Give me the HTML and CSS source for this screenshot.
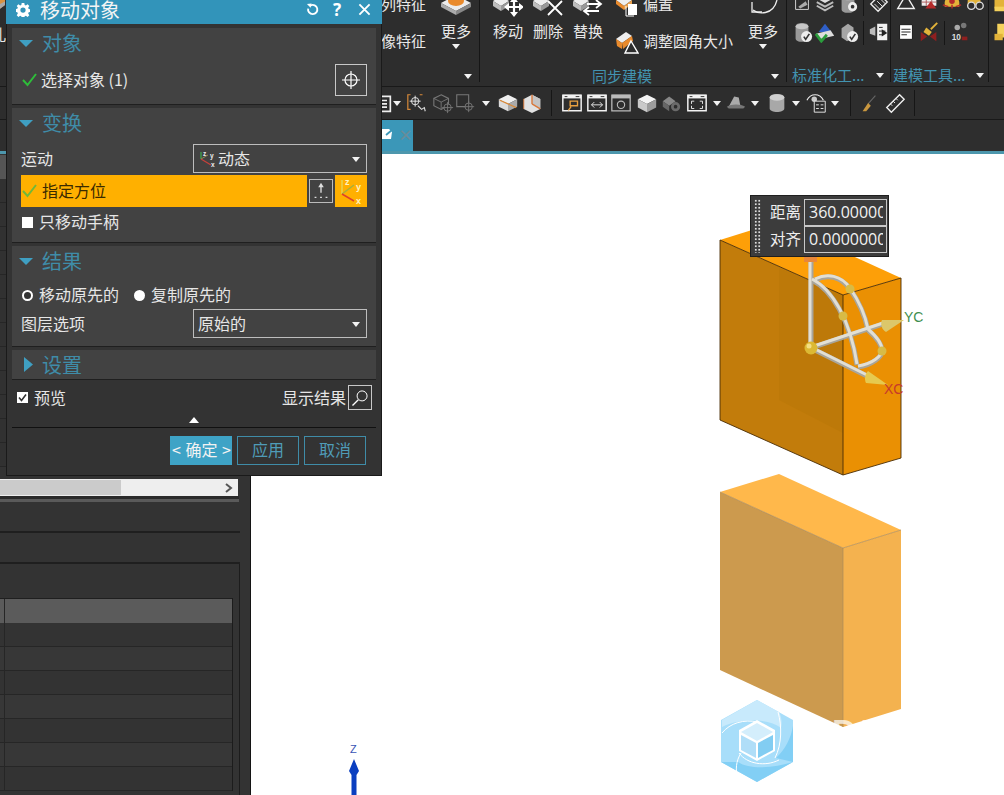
FILE: index.html
```html
<!DOCTYPE html>
<html lang="zh">
<head>
<meta charset="utf-8">
<title>移动对象</title>
<link rel="stylesheet" href="styles.css">
</head>
<body>
<svg class="defs" aria-hidden="true">
  <defs>
    <symbol id="arrow" viewBox="0 0 10 10"><path d="M1 3h8L5 8z" fill="#f2f2f2"/></symbol>
    <symbol id="cube" viewBox="0 0 24 24"><path d="M12 3l10 5-10 5L2 8z" fill="#f4f4f4"/><path d="M2 8l10 5v9L2 17z" fill="#c9c9c9"/><path d="M22 8l-10 5v9l10-5z" fill="#9c9c9c"/></symbol>
    <symbol id="cubeP" viewBox="0 0 24 24"><path d="M12 3l9 4.500v11L12 23l-9-4.500v-11z" fill="#e2e2e2"/><path d="M12 3l9 4.500v11L12 13z" fill="#c4c4c4"/><path d="M12 3v10M12 13l9 5.500" stroke="#d9783a" stroke-width="1.500" fill="none"/><path d="M3 7.500v11" stroke="#d9783a" stroke-width="1"/></symbol>
    <symbol id="win" viewBox="0 0 24 24"><path d="M2 3.500h20v17H2z" fill="#2d2d2d" stroke="#f2f2f2" stroke-width="1.600"/><path d="M2 3h20v4H2z" fill="#f2f2f2"/><path d="M4 5h3M16 5h4" stroke="#2d2d2d" stroke-width="1"/></symbol>
    <symbol id="gcyl" viewBox="0 0 24 24"><path d="M5 6c0-5 14-5 14 0v13c0 5-14 5-14 0z" fill="#999"/><ellipse cx="12" cy="6" rx="7" ry="3" fill="#c6c6c6"/></symbol>
    <symbol id="chk" viewBox="0 0 24 24"><circle cx="17" cy="17" r="6" fill="#eee"/><path d="M14 17l2 3 4-6" stroke="#333" stroke-width="1.800" fill="none"/></symbol>
    <symbol id="rcube" viewBox="0 0 30 30"><path d="M0 8l8-5 8 5-8 5z" fill="#eee"/><path d="M0 8l8 5v5L0 13z" fill="#bdbdbd"/><path d="M16 8l-8 5v5l8-5z" fill="#999"/></symbol>
  </defs>
</svg>

<div class="app">
  <header class="ribbon">
    <div class="stub">
      <svg class="stub-cube" viewBox="0 0 16 16"><path d="M0 2h16v6L8 14 0 8z" fill="#d9913f"/><path d="M8 14V8l8-4v4z" fill="#a8a8a8"/></svg>
      <span class="stub-text">孔</span>
    </div>

    <section class="grp grp-a">
      <div class="grp-body">
        <div class="small-col col-feature">
          <div class="small-row">列特征</div>
          <div class="small-row">像特征</div>
        </div>
        <div class="tool tool-more">
          <svg class="tool-icon" viewBox="0 0 30 30"><path d="M15 2l15 8-15 8-15-8z" fill="#ececec"/><path d="M0 10l15 8v4L0 14z" fill="#aaa"/><path d="M30 10l-15 8v4l15-8z" fill="#888"/><ellipse cx="15" cy="8" rx="8" ry="5" fill="#e98a2c"/></svg>
          <span>更多</span>
          <svg class="more-arrow"><use href="#arrow"/></svg>
        </div>
      </div>
      <div class="grp-label label-a"><svg class="lab-arrow"><use href="#arrow"/></svg></div>
    </section>

    <section class="grp grp-b">
      <div class="grp-body">
        <div class="tool">
          <svg class="tool-icon" viewBox="0 0 30 30"><use href="#rcube"/><path d="M21 7v14M14 14h14" stroke="#fff" stroke-width="2.200"/><path d="M21 4l4 5h-8zM21 24l4-5h-8zM11 14l5-4v8zM31 14l-5-4v8z" fill="#fff"/></svg>
          <span>移动</span>
        </div>
        <div class="tool">
          <svg class="tool-icon" viewBox="0 0 30 30"><use href="#rcube"/><path d="M15 8l14 14M29 8L15 22" stroke="#fff" stroke-width="1.800"/></svg>
          <span>删除</span>
        </div>
        <div class="tool">
          <svg class="tool-icon" viewBox="0 0 30 30"><use href="#rcube"/><path d="M14 11h13m-4-4l5 4-5 4M26 18H12m4-4l-5 4 5 4" stroke="#fff" stroke-width="1.800" fill="none"/></svg>
          <span>替换</span>
        </div>
        <div class="small-col col-sync">
          <div class="small-row">
            <svg class="small-icon" viewBox="0 0 24 24"><path d="M1 7l8-5 8 5-8 6z" fill="#eee"/><path d="M1 7l8 6v4L1 11z" fill="#e98a2c"/><path d="M17 7l-8 6v4l8-6z" fill="#e9a04c"/><path d="M11 13v10h8" fill="none" stroke="#fff"/><path d="M13 11h9v11h-9z" fill="#fff"/></svg>
            <span>偏置</span>
          </div>
          <div class="small-row">
            <svg class="small-icon" viewBox="0 0 24 24"><path d="M1 9l10-7 6 4-10 7z" fill="#eee"/><path d="M1 9l6 4 0 6-5-3z" fill="#e98a2c"/><path d="M7 13l10-7 1 5-10 8z" fill="#e98a2c"/><path d="M16 11l7 12H10z" fill="#2d2d2d" stroke="#fff" stroke-width="1.400"/></svg>
            <span>调整圆角大小</span>
          </div>
        </div>
        <div class="tool tool-more">
          <svg class="tool-icon" viewBox="0 0 30 30"><path d="M5 17c5 4 20 6 24-10" fill="none" stroke="#eee" stroke-width="1.300"/><path d="M4 9v10h10" fill="none" stroke="#eee" stroke-width="1.300"/></svg>
          <span>更多</span>
          <svg class="more-arrow"><use href="#arrow"/></svg>
        </div>
      </div>
      <div class="grp-label label-b">同步建模<svg class="lab-arrow"><use href="#arrow"/></svg></div>
    </section>

    <section class="grp grp-c">
      <div class="icon-rows">
        <div class="icon-row">
          <svg class="ico" viewBox="0 0 24 24"><path d="M5 5h14v14H5z" fill="none" stroke="#ddd"/><path d="M8 16l8-6 2 4-8 4z" fill="#aaa"/></svg>
          <svg class="ico" viewBox="0 0 24 24"><path d="M12 2l9 5-9 5-9-5z" fill="#ddd"/><path d="M3 11l9 5 9-5M3 15l9 5 9-5" stroke="#bbb" stroke-width="2" fill="none"/></svg>
          <svg class="ico" viewBox="0 0 24 24"><use href="#gcyl"/><circle cx="17" cy="16" r="5" fill="#eee"/><circle cx="17" cy="16" r="2" fill="#333"/></svg>
          <i class="vsep"></i>
          <svg class="ico" viewBox="0 0 24 24"><path d="M3 13L13 3l8 8-10 10z" fill="none" stroke="#eee" stroke-width="1.500"/><path d="M7 13l6 6M10 10l6 6M13 7l6 6" stroke="#eee"/></svg>
        </div>
        <div class="icon-row">
          <svg class="ico" viewBox="0 0 24 24"><use href="#gcyl"/><use href="#chk"/></svg>
          <svg class="ico" viewBox="0 0 24 24"><path d="M12 3l7 9H5z" fill="#2f5fc7"/><path d="M2 14l16-4 4 6-16 4z" fill="#ddd"/><path d="M2 14l6 8 6-7" fill="none" stroke="#2a9c3c" stroke-width="3"/></svg>
          <svg class="ico" viewBox="0 0 24 24"><path d="M5 8l7-5 6 4v11l-7 4-6-4z" fill="#a6a6a6"/><use href="#chk"/></svg>
          <i class="vsep"></i>
          <svg class="ico" viewBox="0 0 24 24"><path d="M10 3h11v18H10z" fill="#f2f2f2"/><path d="M12 7h4M12 11h7M12 15h4" stroke="#222"/><path d="M2 9l6-3v10l-6-2z" fill="#bbb"/><path d="M15 9l6 4-6 4z" fill="#222"/></svg>
        </div>
      </div>
      <div class="grp-label label-c">标准化工...<svg class="lab-arrow"><use href="#arrow"/></svg></div>
    </section>

    <section class="grp grp-d">
      <div class="icon-rows">
        <div class="icon-row">
          <svg class="ico" viewBox="0 0 24 24"><path d="M12 3l9 15H3z" fill="none" stroke="#f2f2f2" stroke-width="1.500"/></svg>
          <svg class="ico" viewBox="0 0 24 24"><path d="M4 3h16v12H4z" fill="#eee"/><path d="M4 7h16M4 11h16M9 3v12M15 3v12" stroke="#a55"/><path d="M14 10l6 8H8z" fill="#b52a2a"/></svg>
          <svg class="ico" viewBox="0 0 24 24"><path d="M4 12c0-10 16-10 16 0v4H4z" fill="#e3b33a"/><circle cx="12" cy="10" r="3" fill="#b52a2a"/><path d="M2 14l6 2M22 14l-6 2M12 14v4" stroke="#b52a2a" stroke-width="1.600"/></svg>
          <svg class="ico" viewBox="0 0 24 24"><path d="M4 10c0-8 14-8 14 0v4H4z" fill="#e3b33a"/><circle cx="8" cy="15" r="4" fill="#2d2d2d" stroke="#ddd" stroke-width="1.500"/><circle cx="17" cy="15" r="4" fill="#2d2d2d" stroke="#ddd" stroke-width="1.500"/></svg>
        </div>
        <div class="icon-row">
          <svg class="ico" viewBox="0 0 24 24"><path d="M5 4h14v16H5z" fill="#fff" stroke="#111"/><path d="M7 9h10M7 12h10M7 15h6" stroke="#111"/></svg>
          <svg class="ico" viewBox="0 0 24 24"><path d="M14 9l7-7" stroke="#e3b33a" stroke-width="2"/><path d="M9 7l6 5-3 4-6-4z" fill="#e3b33a"/><path d="M3 12l7 5-7 5zM20 12l-7 5 7 5z" fill="#8e1f1f"/></svg>
          <i class="vsep"></i>
          <svg class="ico" viewBox="0 0 24 24"><circle cx="9" cy="7" r="3" fill="#aaa"/><circle cx="16" cy="5" r="3" fill="#777"/><text class="mini-num" x="3" y="21">10</text><path d="M14 17h6v4h-6z" fill="#8e1f1f"/></svg>
        </div>
      </div>
      <div class="grp-label label-d">建模工具...<svg class="lab-arrow"><use href="#arrow"/></svg></div>
    </section>

    <section class="grp-e">
      <div class="icon-rows">
        <div class="icon-row"><svg class="ico" viewBox="0 0 24 24"><path d="M6 4h12v14H6z" fill="#e3b33a"/><path d="M6 16h12v5H6z" fill="#f5d25c"/></svg></div>
        <div class="icon-row"><svg class="ico" viewBox="0 0 24 24"><path d="M9 3h9v15H9z" fill="#f5d25c"/><path d="M6 14h9v7H6z" fill="#e3b33a"/></svg></div>
      </div>
    </section>
  </header>

  <nav class="toolbar">
    <svg class="i i20" viewBox="0 0 24 24"><path d="M2 4h20v18H2z" fill="none" stroke="#eee" stroke-width="2"/><path d="M6 9h12M6 13h12M6 17h12" stroke="#eee" stroke-width="2"/></svg>
    <svg class="a"><use href="#arrow"/></svg>
    <svg class="i g4" viewBox="0 0 24 24"><path d="M5 3H2v16h3M15 3h3" fill="none" stroke="#d98a3a" stroke-width="1.300"/><circle cx="10" cy="10" r="4" fill="none" stroke="#eee"/><path d="M10 4v12M4 10h12" stroke="#eee"/><path d="M13 15l4 4 3-2 1 4" fill="none" stroke="#ddd" stroke-width="1.200"/></svg>
    <svg class="i g4" viewBox="0 0 24 24"><path d="M10 3l8 4v8l-8 4-8-4V7z" fill="none" stroke="#777" stroke-width="1.200"/><path d="M2 7l8 4 8-4M10 11v8" stroke="#777" fill="none"/><circle cx="17" cy="17" r="4" fill="#2d2d2d" stroke="#777"/><path d="M17 11v12M11 17h12" stroke="#777"/></svg>
    <svg class="i" viewBox="0 0 24 24"><path d="M3 3h13v13H3z" fill="none" stroke="#777" stroke-width="1.200"/><circle cx="16" cy="16" r="4" fill="#2d2d2d" stroke="#777"/><path d="M16 10v12M10 16h12" stroke="#777"/></svg>
    <svg class="a g5"><use href="#arrow"/></svg>
    <svg class="i g6" viewBox="0 0 24 24"><path d="M12 3l10 5-10 5L2 8z" fill="#efefef"/><path d="M2 8l10 5v8L2 16z" fill="#dcdcdc"/><path d="M22 8l-10 5v8l10-5z" fill="#aaa"/><path d="M3 9l18 8" stroke="#d98a3a" stroke-width="1.400"/></svg>
    <svg class="i g2" viewBox="0 0 24 24"><use href="#cubeP"/></svg>
    <i class="tsep"></i>
    <svg class="i" viewBox="0 0 24 24"><use href="#win"/><path d="M10 10h8v5h-8zM11 16l-3 4" fill="none" stroke="#e8a040" stroke-width="1.500"/></svg>
    <svg class="i g3" viewBox="0 0 24 24"><use href="#win"/><path d="M6 14h12m-9-3l-3 3 3 3m6-6l3 3-3 3" stroke="#eee" fill="none"/></svg>
    <svg class="i g2" viewBox="0 0 24 24"><path d="M2 3.500h20v17H2z" fill="#2d2d2d" stroke="#bbb" stroke-width="1.400"/><path d="M2 3h20v4H2z" fill="#bbb"/><circle cx="12" cy="14" r="4" fill="none" stroke="#bbb" stroke-width="1.200"/></svg>
    <svg class="i g4" viewBox="0 0 24 24"><use href="#cube"/></svg>
    <svg class="i g2" viewBox="0 0 24 24"><path d="M3 10l7-5 7 5-7 5z" fill="#888"/><path d="M3 10l7 5v6l-7-5z" fill="#666"/><circle cx="17" cy="16" r="5" fill="#6a6a6a"/><circle cx="17" cy="16" r="2" fill="#2d2d2d"/></svg>
    <svg class="i g4" viewBox="0 0 24 24"><use href="#win"/><path d="M6 10h3M6 10v3M18 10h-3M18 10v3M6 18h3M6 18v-3M18 18h-3M18 18v-3" stroke="#eee"/></svg>
    <svg class="a g4"><use href="#arrow"/></svg>
    <svg class="i g3" viewBox="0 0 24 24"><path d="M10 5l5 1 2 10H4z" fill="#aaa"/><path d="M2 16c5-3 15-3 20 0l-2 2H4z" fill="#777"/></svg>
    <svg class="a g3"><use href="#arrow"/></svg>
    <svg class="i g6" viewBox="0 0 24 24"><path d="M4 6c0-5 16-5 16 0v12c0 5-16 5-16 0z" fill="#a8a8a8"/><ellipse cx="12" cy="6" rx="8" ry="3.500" fill="#cfcfcf"/></svg>
    <svg class="a g3"><use href="#arrow"/></svg>
    <svg class="i g5" viewBox="0 0 24 24"><path d="M1 9c4-8 14-8 18 0" fill="none" stroke="#eee" stroke-width="1.200"/><circle cx="9" cy="8" r="3" fill="#ccc"/><path d="M9 10h12v12H9z" fill="#2d2d2d" stroke="#eee"/><path d="M11 14h3M16 14h3M11 18h3M16 18h3" stroke="#eee"/></svg>
    <svg class="a g2"><use href="#arrow"/></svg>
    <i class="tsep tsep-wide"></i>
    <svg class="i" viewBox="0 0 24 24"><path d="M19 4l-8 9" stroke="#666" stroke-width="1.200"/><path d="M11 12l3 3-5 6-4 0z" fill="#c9973f"/></svg>
    <svg class="i g4" viewBox="0 0 24 24"><path d="M3 17L17 3l5 5L8 22z" fill="none" stroke="#f0f0f0" stroke-width="1.500"/><path d="M7 13l2 2M10 10l2 2M13 7l2 2" stroke="#f0f0f0"/></svg>
    <i class="tsep"></i>
  </nav>

  <div class="tabs">
    <div class="tab">
      <svg class="tab-doc" viewBox="0 0 12 14"><path d="M0 2h8l3 3-1 7H0z" fill="#fff"/><path d="M5 8l6-5" stroke="#3b97b8" stroke-width="1.800"/></svg>
      <span class="tab-x">×</span>
    </div>
  </div>

  <main class="main">
    <aside class="side">
      <div class="side-tree">
        <div class="tree-head"></div>
        <div class="tree-row"></div><div class="tree-row"></div><div class="tree-row"></div>
        <div class="tree-row"></div><div class="tree-row"></div><div class="tree-row"></div>
        <div class="tree-row"></div><div class="tree-row"></div><div class="tree-row"></div>
        <div class="tree-row"></div><div class="tree-row"></div><div class="tree-row"></div>
      </div>
      <div class="hscroll">
        <div class="hthumb"></div>
        <svg class="hchev" viewBox="0 0 10 10"><path d="M2 1l5 4-5 4" fill="none" stroke="#555" stroke-width="2"/></svg>
      </div>
      <div class="strip"></div>
      <div class="panel-a"></div>
      <div class="panel-b"></div>
      <div class="table-box">
        <div class="table">
          <div class="t-head"><i class="t-c0"></i><i class="t-c1"></i></div>
          <div class="t-row"><i class="t-c0"></i><i class="t-c1"></i></div>
          <div class="t-row"><i class="t-c0"></i><i class="t-c1"></i></div>
          <div class="t-row"><i class="t-c0"></i><i class="t-c1"></i></div>
          <div class="t-row"><i class="t-c0"></i><i class="t-c1"></i></div>
          <div class="t-row"><i class="t-c0"></i><i class="t-c1"></i></div>
          <div class="t-row"><i class="t-c0"></i><i class="t-c1"></i></div>
          <div class="t-row"><i class="t-c0"></i><i class="t-c1"></i></div>
        </div>
      </div>
    </aside>

    <div class="viewport">
      <svg class="scene" viewBox="251 154 753 641">
        <!-- copied body -->
        <path d="M720 492l123 56v179l-123-57z" fill="#cc9a4e"/>
        <path d="M843 548l58-18v179l-58 18z" fill="#f4b24f"/>
        <path d="M720 492l59-18 122 56-58 18z" fill="#ffb84b"/>
        <path d="M720 492l123 56 58-18M843 548v179" fill="none" stroke="#a98a5a" stroke-width=".7"/>
        <!-- moving body -->
        <path d="M720 240l123 55v180l-123-55z" fill="#c27c0b"/>
        <path d="M779 268l64 27v138l-64-33z" fill="#bd7909"/>
        <path d="M843 295l58-17v180l-58 17z" fill="#ea9003"/>
        <path d="M720 240l58-18 123 56-58 17z" fill="#fd9f08"/>
        <path d="M720 240l123 55 58-17M843 295v180M720 240v180l123 55 58-17V278" fill="none" stroke="#4a2c05" stroke-width=".9"/>
        <!-- manipulator -->
        <g fill="none" stroke="#a8a59b" stroke-width="5">
          <path d="M811 348V262"/>
          <path d="M812 280c20 10 38 40 45 85"/>
          <path d="M815 280c12-6 26-4 35 9s15 26 18 41"/>
          <path d="M858 367c14-2 24-10 24-16 0-6-6-14-14-21"/>
          <path d="M811 348l72-24"/>
          <path d="M811 348l58 29"/>
        </g>
        <g fill="none" stroke="#e2dfd4" stroke-width="3">
          <path d="M810 348V262"/>
          <path d="M812 279c20 10 38 40 45 85"/>
          <path d="M815 279c12-6 26-4 35 9s15 26 18 41"/>
          <path d="M858 366c14-2 24-10 24-16 0-6-6-14-14-21"/>
          <path d="M811 347l72-24"/>
          <path d="M811 347l58 29"/>
        </g>
        <rect x="804" y="256" width="13" height="6" fill="#e8873a"/>
        <path d="M882 320l22 0-18 12c-4-2-6-8-4-12z" fill="#dcc76a"/>
        <path d="M868 371l20 14-22-2c-2-4-1-9 2-12z" fill="#e6c94f"/>
        <circle cx="811" cy="348" r="6.500" fill="#dcb934"/>
        <circle cx="809" cy="346" r="2.500" fill="#f3df84"/>
        <circle cx="850" cy="289" r="4.500" fill="#d8bb46"/>
        <circle cx="843" cy="316" r="4.500" fill="#d8bb46"/>
        <circle cx="882" cy="351" r="4.500" fill="#d8bb46"/>
        <text class="ax ax-y" x="904" y="322">YC</text>
        <text class="ax ax-x" x="884" y="394">XC</text>
        <!-- triad -->
        <text class="ax ax-z" x="350" y="753">Z</text>
        <path d="M354 759l5 12-2.500 4v20h-5v-20l-2.500-4z" fill="#0b3fc0"/>
        <!-- watermark -->
        <text class="mark" x="832" y="743">DI</text>
        <path d="M757 700l36 20v42l-36 20-36-20v-42z" fill="#a8defa"/>
        <path d="M757 700l22 12c3 6 3 12 2 16-12-10-40-10-59-1v-7z" fill="#c8eafc"/>
        <path d="M738 762c12 8 36 6 55 0l-36 20-36-20z" fill="#82cff5"/>
        <path d="M793 726v36l-17-4c9-8 15-20 17-32z" fill="#82cff5"/>
        <path d="M778 712c4 14 4 32-3 46M722 733c8-10 22-14 36-11M739 753c8 11 26 14 40 7M741 753c-5 8-6 17-3 26" fill="none" stroke="#fff" stroke-width="1"/>
        <path d="M757 720l18 10v21l-18 10-18-10v-21z" fill="#fff"/>
        <path d="M757 723l16 9-16 9-16-9z" fill="#d4eefc"/>
        <path d="M741 735l15 8v15l-15-8z" fill="#b0def8"/>
        <path d="M773 735l-15 8v15l15-8z" fill="#82cdf2"/>
      </svg>

      <div class="float-box">
        <div class="grip"></div>
        <div class="float-rows">
          <div class="float-row"><span class="float-lab">距离</span><div class="float-in"><span class="float-val">360.00000</span></div></div>
          <div class="float-row"><span class="float-lab">对齐</span><div class="float-in"><span class="float-val">0.0000000</span></div></div>
        </div>
      </div>
    </div>
  </main>

  <div class="dialog">
    <div class="dlg-title">
      <svg class="dlg-gear" viewBox="0 0 16 16"><path d="M6.500 0h3l.4 2.200 1.400.6L13.200 1.500l2 2-1.300 1.900.6 1.400 2.200.4v3l-2.200.4-.6 1.400 1.300 1.900-2 2-1.900-1.300-1.400.6-.4 2.200h-3l-.4-2.200-1.400-.6-1.900 1.300-2-2 1.300-1.900-.6-1.400L-.7 10V7l2.200-.4.6-1.400L.8 3.500l2-2 1.900 1.300 1.400-.6z" fill="#fff"/><circle cx="8" cy="8" r="3" fill="#3294ba"/></svg>
      <span class="dlg-name">移动对象</span>
      <svg class="dlg-btn" viewBox="0 0 14 14"><path d="M5 2.500A5 5 0 1 1 2.300 6" fill="none" stroke="#fff" stroke-width="2"/><path d="M1 1l5-.5L5 5z" fill="#fff"/></svg>
      <span class="dlg-q">?</span>
      <svg class="dlg-btn dlg-close" viewBox="0 0 14 14"><path d="M1.500 1.500l11 11M12.500 1.500l-11 11" stroke="#fff" stroke-width="2"/></svg>
    </div>

    <section class="sec sec-1">
      <div class="sec-head">
        <svg class="tri" viewBox="0 0 14 7"><path d="M0 0h14L7 7z"/></svg><span>对象</span>
      </div>
      <div class="row row-sel">
        <svg class="check" viewBox="0 0 15 14"><path d="M1 7l4.500 5L14 1" fill="none" stroke="#2ebd3a" stroke-width="2"/></svg>
        <span class="lbl">选择对象 (1)</span>
        <div class="ico-btn">
          <svg viewBox="0 0 20 20"><circle cx="10" cy="10" r="6" fill="none" stroke="#fff" stroke-width="1.200"/><path d="M10 1v18M1 10h18" stroke="#fff" stroke-width="1.200"/></svg>
        </div>
      </div>
    </section>

    <section class="sec sec-2">
      <div class="sec-head">
        <svg class="tri" viewBox="0 0 14 7"><path d="M0 0h14L7 7z"/></svg><span>变换</span>
      </div>
      <div class="row row-motion">
        <span class="lbl">运动</span>
        <div class="select">
          <svg class="sel-ico" viewBox="0 0 16 16"><path d="M2 8V1" stroke="#3ea24a" stroke-width="1.300"/><path d="M2 8l7-4" stroke="#8a8a5a"/><path d="M2 8l10 6" stroke="#c6403a" stroke-width="1.300"/><text class="mini" x="4" y="5">z</text><text class="mini" x="11" y="7">y</text><text class="mini" x="12" y="16">x</text></svg>
          <span class="sel-text">动态</span>
          <svg class="sel-arrow"><use href="#arrow"/></svg>
        </div>
      </div>
      <div class="row row-orient">
        <div class="orient">
          <svg class="check" viewBox="0 0 15 14"><path d="M1 7l4.500 5L14 1" fill="none" stroke="#6fb83a" stroke-width="2"/></svg>
          <span class="sel-text">指定方位</span>
        </div>
        <div class="ico-btn small-btn">
          <svg viewBox="0 0 24 24"><path d="M12 5v9" stroke="#ddd" stroke-width="1.500"/><path d="M12 3l3 5H9z" fill="#ddd"/><path d="M5 19h2M11 19h2M17 19h2" stroke="#ddd" stroke-width="1.500"/></svg>
        </div>
        <div class="orient-ico">
          <svg viewBox="0 0 32 32"><path d="M7 19V5" stroke="#e9d44f" stroke-width="1.500"/><path d="M7 19l12-9" stroke="#a8b03a" stroke-width="1.500"/><path d="M7 19l12 7" stroke="#e0402a" stroke-width="1.500"/><text class="mini m-w" x="10" y="10">z</text><text class="mini m-w" x="21" y="15">y</text><text class="mini m-w" x="21" y="29">x</text></svg>
        </div>
      </div>
      <label class="row row-check">
        <i class="box"></i><span class="lbl">只移动手柄</span>
      </label>
    </section>

    <section class="sec sec-3">
      <div class="sec-head">
        <svg class="tri" viewBox="0 0 14 7"><path d="M0 0h14L7 7z"/></svg><span>结果</span>
      </div>
      <div class="row row-radio">
        <i class="radio radio-on"></i><span class="lbl">移动原先的</span>
        <i class="radio radio-off"></i><span class="lbl">复制原先的</span>
      </div>
      <div class="row row-layer">
        <span class="lbl">图层选项</span>
        <div class="select select-plain">
          <span class="sel-text">原始的</span>
          <svg class="sel-arrow"><use href="#arrow"/></svg>
        </div>
      </div>
    </section>

    <section class="sec sec-4">
      <div class="sec-head">
        <svg class="tri-r" viewBox="0 0 9 15"><path d="M0 0l9 7.500L0 15z"/></svg><span>设置</span>
      </div>
    </section>

    <div class="foot-row">
      <i class="box box-check"><svg viewBox="0 0 11 11"><path d="M2 5.500l2.500 3L9 2.500" fill="none" stroke="#333" stroke-width="1.600"/></svg></i>
      <span class="lbl">预览</span>
      <span class="lbl foot-show">显示结果</span>
      <div class="ico-btn show-btn">
        <svg viewBox="0 0 24 24"><circle cx="14.500" cy="9.500" r="6" fill="none" stroke="#fff" stroke-width="1.200"/><path d="M10 14l-7 7" stroke="#fff" stroke-width="1.600"/></svg>
      </div>
    </div>
    <div class="collapse"><svg viewBox="0 0 10 6"><path d="M0 6h10L5 0z" fill="#fff"/></svg></div>
    <div class="actions">
      <button class="btn btn-ok"><span>&lt;</span><span>确定</span><span>&gt;</span></button>
      <button class="btn">应用</button>
      <button class="btn">取消</button>
    </div>
  </div>
</div>
</body>
</html>
```

FILE: styles.css
```css
* { box-sizing: border-box; }
html, body { margin: 0; height: 100%; overflow: hidden; background: #2e2e2e; }
body { font-family: "Noto Sans CJK SC", "Noto Sans", sans-serif; color: #e6e6e6; }
i { display: block; }
.defs { position: absolute; width: 0; height: 0; }

.app { position: relative; width: 1004px; height: 795px; display: flex; flex-direction: column; overflow: hidden; }

/* Ribbon */
.ribbon { height: 87px; flex: none; display: flex; background: #2d2d2d; border-bottom: 1px solid #191919; overflow: hidden; font-size: 15px; color: #e8e8e8; }
.stub { width: 378px; flex: none; }
.stub-cube { display: block; width: 16px; height: 14px; margin: -2px 0 0 -10px; }
.stub-text { display: block; margin: 13px 0 0 -9px; font-size: 15px; line-height: 18px; }
.grp { position: relative; flex: none; height: 86px; display: flex; flex-direction: column; }
.grp::after { content: ""; position: absolute; right: 0; top: 0; height: 82px; width: 1px; background: #161616; }
.grp-a { width: 102px; }
.grp-b { width: 307px; padding-left: 13px; }
.grp-c { width: 104px; padding-left: 4px; }
.grp-d { width: 98px; padding-left: 4px; }
.grp-e { flex: none; width: 22px; }
.grp-body { display: flex; height: 72px; margin-top: -7px; flex: none; }
.tool { width: 30px; margin-right: 10px; display: flex; flex-direction: column; align-items: center; flex: none; line-height: 16px; white-space: nowrap; }
.tool-icon { width: 30px; height: 30px; flex: none; }
.tool-more { margin-right: 0; margin-left: 15px; }
.more-arrow { width: 10px; height: 10px; margin-top: 2px; }
.small-col { display: flex; flex-direction: column; gap: 13px; flex: none; }
.small-row { height: 24px; display: flex; align-items: center; gap: 4px; white-space: nowrap; line-height: 22px; padding-bottom: 2px; }
.col-feature { width: 48px; padding-left: 3px; }
.col-sync { width: 118px; margin-left: 2px; }
.small-icon { width: 24px; height: 24px; flex: none; margin-bottom: -2px; }
.grp-label { height: 22px; flex: none; display: flex; align-items: center; color: #4293b0; line-height: 22px; white-space: nowrap; }
.lab-arrow { width: 10px; height: 10px; flex: none; }
.label-a { padding-left: 85px; }
.label-b { padding-left: 99px; }
.label-b .lab-arrow { margin-left: 118px; }
.label-c { padding-left: 1px; }
.label-c .lab-arrow { margin-left: 10px; }
.label-d { margin-left: -2px; }
.label-d .lab-arrow { margin-left: 9px; }
.icon-rows { height: 72px; margin-top: -8px; display: flex; flex-direction: column; gap: 7px; flex: none; }
.grp-e .icon-rows { height: 60px; }
.icon-row { height: 22px; display: flex; gap: 1px; flex: none; }
.ico { width: 22px; height: 22px; flex: none; }
.mini-num { font: 700 9px "Liberation Sans", sans-serif; fill: #ddd; }
.vsep { width: 7px; flex: none; position: relative; }
.vsep::before { content: ""; position: absolute; left: 3px; top: 0; bottom: -2px; width: 1px; background: #161616; }

/* Toolbar */
.toolbar { height: 33px; flex: none; display: flex; align-items: center; padding-left: 372px; background: #2d2d2d; border-bottom: 1px solid #191919; }
.i { width: 22px; height: 22px; flex: none; }
.i20 { width: 20px; }
.a { width: 10px; height: 10px; flex: none; }
.g2 { margin-left: 2px; }
.g3 { margin-left: 3px; }
.g4 { margin-left: 4px; }
.g5 { margin-left: 5px; }
.g6 { margin-left: 6px; }
.tsep { width: 1px; height: 26px; background: #161616; margin: 0 9px 0 8px; flex: none; }
.tsep-wide { margin: 0 7px 0 10px; }

/* Tabs */
.tabs { height: 31px; flex: none; padding-left: 380px; display: flex; }
.tab { width: 33px; background: #3b97b8; display: flex; align-items: center; gap: 5px; padding: 0 0 3px 1px; }
.tab-doc { width: 12px; height: 14px; flex: none; }
.tab-x { color: #6a8c98; font-size: 15px; line-height: 15px; font-weight: 700; }

/* Main */
.main { flex: 1; display: flex; border-top: 3px solid #4d97ad; min-height: 0; }
.side { width: 251px; flex: none; background: #333; border-right: 1px solid #141414; display: flex; flex-direction: column; overflow: hidden; }
.side-tree { height: 325px; flex: none; }
.tree-head { height: 24px; background: #555; margin-top: 1px; }
.tree-row { height: 24px; border-bottom: 1px solid #262626; background: #313131; }
.hscroll { height: 17px; width: 238px; flex: none; background: #eee; position: relative; display: flex; align-items: center; justify-content: flex-end; padding-right: 4px; }
.hthumb { position: absolute; left: 0; top: 1px; bottom: 1px; width: 121px; background: #cbcbcb; }
.hchev { width: 10px; height: 10px; }
.strip { height: 6px; width: 239px; flex: none; background: #5a5a5a; border-top: 3px solid #2a2a2a; }
.panel-a { height: 31px; width: 240px; flex: none; border-bottom: 2px solid #1f1f1f; }
.panel-b { height: 31px; width: 240px; flex: none; border-bottom: 2px solid #1f1f1f; }
.table-box { width: 240px; flex: 1; border-right: 1px solid #1c1c1c; padding-top: 34px; overflow: hidden; }
.table { width: 233px; border-right: 1px solid #1c1c1c; }
.t-head { height: 25px; background: #5b5b5b; display: flex; border-top: 1px solid #1f1f1f; }
.t-row { height: 24px; display: flex; border-bottom: 1px solid #262626; background: #333; }
.t-row:nth-child(odd) { background: #373737; }
.t-c0 { width: 5px; border-right: 1px solid #262626; }
.t-c1 { flex: 1; }

/* Viewport */
.viewport { flex: 1; background: #fff; position: relative; overflow: hidden; }
.scene { display: block; width: 753px; height: 641px; }
.ax { font: 14px "Liberation Sans", sans-serif; }
.ax-y { fill: #3f8f4f; }
.ax-x { fill: #c83a2a; }
.ax-z { fill: #3a55b5; font-size: 11px; }
.mark { font: 700 34px "Liberation Sans", sans-serif; fill: #fff; opacity: .7; letter-spacing: 4px; }

.float-box { position: absolute; left: 499px; top: 41px; width: 139px; height: 62px; background: #3c3c3c; border: 1px solid #1f1f1f; display: flex; padding: 3px; }
.grip { width: 7px; flex: none; background-image: radial-gradient(circle, #ddd 1px, transparent 1.200px); background-size: 3.500px 3.500px; }
.float-rows { display: flex; flex-direction: column; margin-left: 9px; }
.float-row { display: flex; align-items: center; height: 27px; gap: 3px; font-size: 15.500px; line-height: 25px; }
.float-lab { width: 31px; white-space: nowrap; color: #eee; padding-bottom: 2px; }
.float-in { width: 83px; height: 27px; border: 1px solid #c8c8c8; padding: 0 3px 0 4px; flex: none; }
.float-val { display: block; overflow: hidden; white-space: nowrap; font: 16px/24px "Open Sans", sans-serif; color: #f2f2f2; }

/* Dialog */
.dialog { position: absolute; left: 6px; top: 0; width: 376px; height: 476px; background: #333; border: 1px solid #1a1a1a; border-top: 0; display: flex; flex-direction: column; align-items: stretch; font-size: 16px; }
.dlg-title { height: 24px; margin: 0 -1px; flex: none; background: #3294ba; display: flex; align-items: center; padding: 0 11px 5px 10px; color: #fff; }
.dlg-gear { width: 14px; height: 14px; flex: none; }
.dlg-name { font-size: 20px; line-height: 20px; margin-left: 10px; color: #f4f4f4; flex: 1; white-space: nowrap; }
.dlg-btn { width: 13px; height: 13px; flex: none; }
.dlg-q { font: 700 17px/16px "Noto Sans", sans-serif; width: 24px; text-align: center; margin-left: 6px; flex: none; }
.dlg-close { margin-left: 9px; }

.sec { margin: 4px 5px 0; background: #424242; flex: none; box-shadow: 0 1px 0 #1f1f1f; padding: 0 9px; }
.sec-1 { height: 76px; }
.sec-2 { height: 134px; }
.sec-3 { height: 100px; }
.sec-4 { height: 29px; }
.sec-head { height: 30px; margin: 0 0 0 -2px; display: flex; align-items: center; color: #3f8ca8; font-size: 20px; line-height: 30px; white-space: nowrap; }
.sec-4 .sec-head { height: 29px; }
.tri { width: 14px; height: 7px; fill: #3f9fc2; margin-right: 9px; flex: none; }
.tri-r { width: 9px; height: 15px; fill: #3f9fc2; margin: 0 9px 0 5px; flex: none; }

.row { display: flex; align-items: center; }
.lbl, .sel-text { white-space: nowrap; color: #e6e6e6; margin-top: -2px; }
.check { width: 15px; height: 14px; flex: none; }
.row-sel { height: 32px; margin-top: 6px; padding-left: 1px; }
.row-sel .lbl { margin-left: 4px; flex: 1; }
.ico-btn { width: 32px; height: 32px; border: 1px solid #c8c8c8; display: flex; align-items: center; justify-content: center; flex: none; }
.ico-btn svg { width: 20px; height: 20px; }
.row-motion { height: 29px; margin-top: 6px; justify-content: space-between; }
.select { width: 174px; height: 29px; border: 1px solid #bdbdbd; display: flex; align-items: center; padding: 0 5px; flex: none; white-space: nowrap; }
.select .sel-text { flex: 1; }
.select-plain { padding-left: 4px; }
.sel-ico { width: 16px; height: 16px; margin-right: 3px; flex: none; }
.sel-arrow { width: 10px; height: 10px; flex: none; }
.mini { font: 700 6.500px "Liberation Sans", sans-serif; fill: #eee; }
.m-w { font-size: 9px; fill: #fff3c0; }
.row-orient { height: 32px; margin-top: 2px; }
.orient { width: 286px; height: 32px; background: #ffb000; display: flex; align-items: center; gap: 5px; padding-left: 1px; flex: none; }
.orient .sel-text { color: #3a2a00; }
.small-btn { width: 24px; height: 24px; margin-left: 2px; border-color: #bbb; }
.small-btn svg { width: 22px; height: 22px; }
.orient-ico { width: 32px; height: 32px; background: #ffb000; margin-left: 2px; flex: none; }
.orient-ico svg { display: block; width: 32px; height: 32px; }
.row-check { height: 30px; padding-left: 1px; }
.box { width: 11px; height: 11px; background: #fff; flex: none; }
.row-check .lbl { margin-left: 6px; }
.row-radio { height: 24px; margin-top: 7px; padding-left: 1px; }
.radio { width: 11px; height: 11px; border-radius: 50%; flex: none; }
.radio-on { background: #333; border: 2px solid #fff; }
.radio-off { background: #fff; margin-left: 15px; }
.row-radio .lbl { margin-left: 6px; }
.row-layer { height: 29px; margin-top: 2px; justify-content: space-between; }

.foot-row { height: 25px; margin: 6px 9px 0 10px; display: flex; align-items: center; flex: none; }
.foot-row > .lbl { margin-left: 6px; }
.foot-row > .foot-show { margin-left: auto; margin-right: 2px; }
.box-check svg { display: block; width: 11px; height: 11px; }
.show-btn { width: 24px; height: 25px; }
.collapse { height: 18px; margin: 0 5px; flex: none; display: flex; justify-content: center; align-items: center; padding: 3px 0 0; border-bottom: 1px solid #111; }
.collapse svg { width: 10px; height: 6px; margin-left: -1px; }
.actions { display: flex; justify-content: flex-end; gap: 5px; margin-top: 8px; padding-right: 15px; flex: none; }
.btn { width: 62px; height: 29px; background: #333; border: 1px solid #3f8ca8; color: #4f9cb8; font: 16px/25px "Noto Sans CJK SC", sans-serif; padding: 0 0 2px; }
.btn-ok { background: #3ea3c6; color: #f2f2f2; border-color: #3ea3c6; display: flex; justify-content: space-between; align-items: center; padding: 0 0 2px 1px; }
```
